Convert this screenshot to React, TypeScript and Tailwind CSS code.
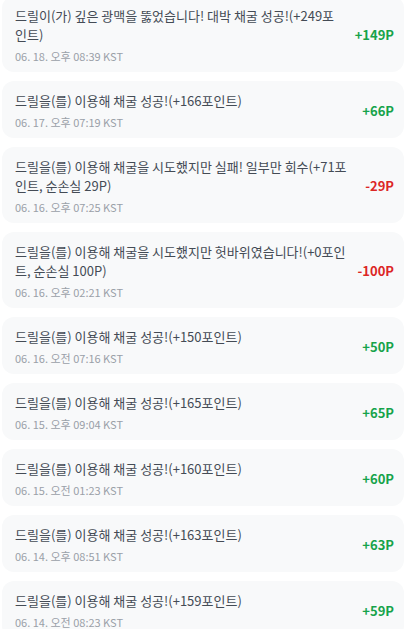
import React from "react";

type Log = {
  message: string;
  date: string;
  amount: number;
};

const logs: Log[] = [
  { message: "드릴이(가) 깊은 광맥을 뚫었습니다! 대박 채굴 성공!(+249포인트)", date: "06. 18. 오후 08:39 KST", amount: 149 },
  { message: "드릴을(를) 이용해 채굴 성공!(+166포인트)", date: "06. 17. 오후 07:19 KST", amount: 66 },
  { message: "드릴을(를) 이용해 채굴을 시도했지만 실패! 일부만 회수(+71포인트, 순손실 29P)", date: "06. 16. 오후 07:25 KST", amount: -29 },
  { message: "드릴을(를) 이용해 채굴을 시도했지만 헛바위였습니다!(+0포인트, 순손실 100P)", date: "06. 16. 오후 02:21 KST", amount: -100 },
  { message: "드릴을(를) 이용해 채굴 성공!(+150포인트)", date: "06. 16. 오전 07:16 KST", amount: 50 },
  { message: "드릴을(를) 이용해 채굴 성공!(+165포인트)", date: "06. 15. 오후 09:04 KST", amount: 65 },
  { message: "드릴을(를) 이용해 채굴 성공!(+160포인트)", date: "06. 15. 오전 01:23 KST", amount: 60 },
  { message: "드릴을(를) 이용해 채굴 성공!(+163포인트)", date: "06. 14. 오후 08:51 KST", amount: 63 },
  { message: "드릴을(를) 이용해 채굴 성공!(+159포인트)", date: "06. 14. 오전 08:23 KST", amount: 59 },
];

function LogItem({ log }: { log: Log }) {
  const positive = log.amount >= 0;
  return (
    <div className="flex items-center justify-between gap-[10px] rounded-xl bg-[#f8f9fa] pl-[13px] pr-2.5 pt-2.5 pb-2">
      <div className="flex-1 min-w-0">
        <p className="text-[13px] leading-[19px] text-[#444b55]">{log.message}</p>
        <p className="mt-1 text-[11px] leading-4 text-[#9aa0a8]">{log.date}</p>
      </div>
      <span className={`shrink-0 text-[13px] font-bold ${positive ? "text-[#16a34a]" : "text-[#dc2626]"}`}>
        {positive ? `+${log.amount}P` : `${log.amount}P`}
      </span>
    </div>
  );
}

export default function App() {
  return (
    <div
      className="min-h-screen bg-white pl-0.5 pr-[3px]"
      style={{ fontFamily: '"Noto Sans CJK KR", "Noto Sans", sans-serif' }}
    >
      <div className="-mt-1 flex flex-col gap-[9px]">
        {logs.map((log, i) => (
          <LogItem key={i} log={log} />
        ))}
      </div>
    </div>
  );
}
